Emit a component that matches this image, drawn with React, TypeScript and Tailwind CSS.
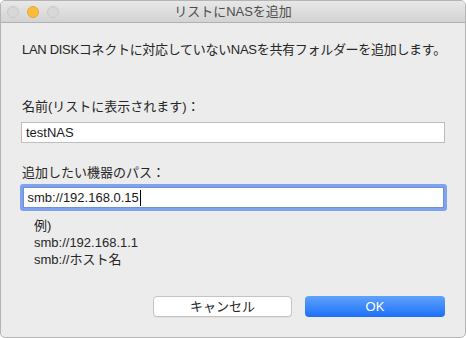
export default function App() {
  const font = { fontFamily: '"Liberation Sans", "Noto Sans CJK JP", sans-serif' }
  return (
    <div className="h-[338px] w-[466px] bg-white" style={font}>
      <div className="flex h-full flex-col overflow-hidden rounded-[5px] border border-[#b4b4b4] bg-[#ececec] text-[13px] text-[#262626]">
        <div className="relative flex h-[22px] shrink-0 items-center justify-center border-b border-[#b1b1b1] bg-gradient-to-b from-[#e8e8e8] to-[#d3d3d3]">
          <div className="absolute left-[6px] top-[5px] flex gap-[8px]">
            <span className="size-[12px] rounded-full border border-[#c8c8c8] bg-[#d8d8d8]" />
            <span className="size-[12px] rounded-full border border-[#e1a73e] bg-[#fcbc3b]" />
            <span className="size-[12px] rounded-full border border-[#c8c8c8] bg-[#d8d8d8]" />
          </div>
          <span className="text-[13px] text-[#4d4d4d]">リストにNASを追加</span>
        </div>
        <div className="flex flex-1 flex-col px-[20px]">
          <p className="mt-[19px] ml-[1px] whitespace-nowrap leading-[16px] tracking-[-0.3px]">LAN DISKコネクトに対応していないNASを共有フォルダーを追加します。</p>
          <p className="mt-[41px] ml-[1px] leading-[16px]">名前(リストに表示されます)：</p>
          <div className="mt-[7px] flex h-[21px] w-[424px] items-center border border-[#bdbdbd] bg-white px-[4px] text-[#1a1a1a]">testNAS</div>
          <p className="mt-[22px] ml-[1px] leading-[16px]">追加したい機器のパス：</p>
          <div className="mt-[3px] w-[427px] rounded-[3px] bg-[#7da2ef] p-[3px] -ml-[1.5px]">
            <div className="flex h-[21px] items-center border border-[#6d8fdc] bg-white px-[4px] text-[#1a1a1a]">
              smb://192.168.0.15<span className="ml-[1px] inline-block h-[16px] w-[1px] bg-black" />
            </div>
          </div>
          <div className="mt-[6px] ml-[13px] flex flex-col leading-[17px]">
            <span>例)</span>
            <span>smb://192.168.1.1</span>
            <span>smb://ホスト名</span>
          </div>
          <div className="mt-[28px] flex justify-end gap-[13px]">
            <button className="h-[21px] w-[139px] rounded-[4px] border border-[#c4c4c4] bg-white text-[13px] text-[#262626] shadow-[0_1px_0_rgba(0,0,0,0.05)]">キャンセル</button>
            <button className="h-[21px] w-[140px] rounded-[4px] bg-gradient-to-b from-[#5fa2fb] to-[#1a6ef9] text-[13px] text-white">OK</button>
          </div>
        </div>
      </div>
    </div>
  )
}
